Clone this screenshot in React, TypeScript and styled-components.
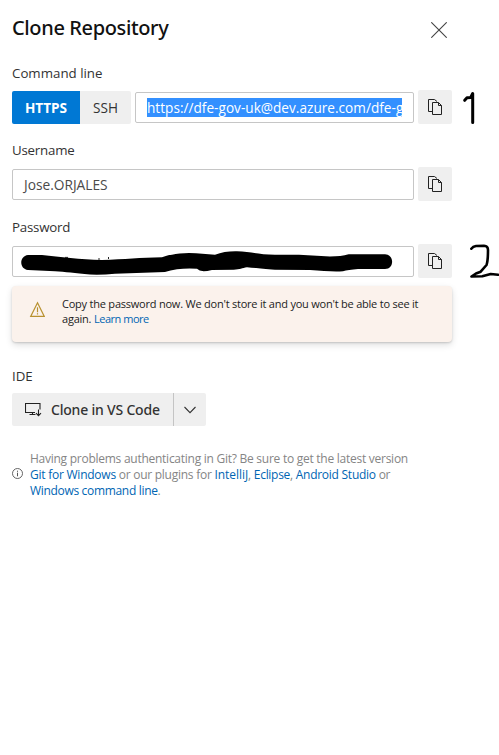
import React from "react";
import styled, { createGlobalStyle } from "styled-components";

const GlobalStyle = createGlobalStyle`
  * { box-sizing: border-box; }
  body { margin: 0; background: #fff; color: #333; font-family: "Open Sans", "Noto Sans", sans-serif; }
  button { font: inherit; color: inherit; border: 0; padding: 0; }
`;

const Panel = styled.main`
  position: relative;
  width: 499px;
  height: 755px;
  padding: 13px 0 0 12px;
  overflow: hidden;
  background: #fff;
`;
const Header = styled.header`
  display: flex;
  align-items: center;
  justify-content: space-between;
  width: 440px;
  height: 32px;
`;
const Title = styled.h1`
  margin: 0 0 2px;
  font: 500 20px/30px "Noto Sans", sans-serif;
  letter-spacing: -0.37px;
  color: #111;
`;
const CloseButton = styled.button`
  display: flex;
  margin: 2px 5px 0 0;
  background: none;
`;
const Label = styled.div<{ $tight?: boolean }>`
  font-size: 13.3px;
  line-height: 20px;
  letter-spacing: ${(p) => (p.$tight ? "-0.22px" : "0")};
`;
const Field = styled.section<{ $top: number }>`
  margin-top: ${(p) => p.$top}px;
`;
const FieldRow = styled.div`
  display: flex;
  align-items: center;
  width: 440px;
  height: 34px;
  margin-top: 7px;
`;
const Segments = styled.div`
  display: flex;
  flex-shrink: 0;
  height: 33px;
  margin: 1px 4px 0 0;
  border-radius: 2px;
  overflow: hidden;
`;
const Segment = styled.button<{ $active?: boolean }>`
  width: ${(p) => (p.$active ? 68 : 51)}px;
  font-size: 13.6px;
  font-weight: ${(p) => (p.$active ? 700 : 400)};
  background: ${(p) => (p.$active ? "#0078d4" : "#efefef")};
  color: ${(p) => (p.$active ? "#fff" : "#333")};
`;
const InputBox = styled.div`
  position: relative;
  flex: 1;
  min-width: 0;
  display: flex;
  align-items: center;
  height: 31px;
  margin-right: 4px;
  padding: 0 11px;
  border: 1px solid #c6c6c6;
  border-radius: 2px;
  font-size: 13.75px;
  letter-spacing: -0.02px;
  color: #4a4a4a;
  white-space: nowrap;
`;
const SelectedText = styled.span`
  flex: 1;
  min-width: 0;
  height: 19px;
  line-height: 20px;
  font-size: 13.6px;
  letter-spacing: 0.02px;
  overflow: hidden;
  background: #3390ff;
  color: #fff;
`;
const CopyButton = styled.button`
  display: flex;
  flex-shrink: 0;
  align-items: center;
  justify-content: center;
  width: 34px;
  height: 34px;
  border-radius: 2px;
  background: #efefef;
`;
const Scribble = styled.svg`
  position: absolute;
  left: -1px;
  top: -1px;
`;
const HandMark = styled.svg<{ $x: number; $y: number }>`
  position: absolute;
  left: ${(p) => p.$x}px;
  top: ${(p) => p.$y}px;
`;
const Message = styled.aside`
  display: flex;
  width: 440px;
  height: 56px;
  margin-top: 8px;
  padding: 10px 0 0 17px;
  border-radius: 4px;
  background: #fbf2ec;
  box-shadow: 0 3px 7px rgba(0, 0, 0, 0.13), 0 1px 2px rgba(0, 0, 0, 0.15);
  color: #222;
`;
const MessageText = styled.p`
  margin: 0 0 0 17px;
  font-size: 11px;
  line-height: 15px;
  letter-spacing: -0.22px;
  white-space: nowrap;
`;
const Link = styled.a<{ $spacing?: number }>`
  color: #0065b3;
  letter-spacing: ${(p) => (p.$spacing === undefined ? "inherit" : `${p.$spacing}px`)};
`;
const SplitButton = styled.div`
  display: flex;
  width: 194px;
  height: 33px;
  margin-top: 7px;
  border-radius: 2px;
  overflow: hidden;
  background: #efefef;
`;
const CloneButton = styled.button`
  display: flex;
  align-items: center;
  gap: 9px;
  width: 161px;
  padding-left: 13px;
  background: none;
  font: 500 14px/20px "Noto Sans", sans-serif;
  letter-spacing: -0.2px;
  white-space: nowrap;
`;
const MenuButton = styled.button`
  display: flex;
  flex: 1;
  align-items: center;
  justify-content: center;
  border-left: 1px solid #c4c4c4;
  background: none;
`;
const Help = styled.footer`
  display: flex;
  align-items: center;
  gap: 7px;
  margin-top: 25px;
`;
const InfoIcon = styled.svg`
  margin-bottom: 3px;
`;
const HelpText = styled.p`
  margin: 0;
  font-size: 12px;
  line-height: 16px;
  letter-spacing: -0.26px;
  color: #858585;
  white-space: nowrap;
`;

const CopyIcon = () => (
  <svg width="16" height="18" viewBox="0 0 16 18" fill="none" stroke="#222" strokeWidth="1">
    <path d="M5.5 13.5h-4v-12h6l2.500 2M5.500 4.500h6l3 3v9h-9zM11.500 4.500v3h3" />
  </svg>
);

const Copy = () => (
  <CopyButton aria-label="Copy">
    <CopyIcon />
  </CopyButton>
);

export default function App() {
  return (
    <>
      <GlobalStyle />
      <Panel>
        <Header>
          <Title>Clone Repository</Title>
          <CloseButton aria-label="Close">
            <svg width="16" height="16" viewBox="0 0 16 16" stroke="#444" strokeWidth="1.1">
              <path d="M.3.3l15.4 15.4M15.7.3L.3 15.7" />
            </svg>
          </CloseButton>
        </Header>

        <Field $top={18}>
          <Label>Command line</Label>
          <FieldRow>
            <Segments>
              <Segment $active>HTTPS</Segment>
              <Segment>SSH</Segment>
            </Segments>
            <InputBox>
              <SelectedText>https://dfe-gov-uk@dev.azure.com/dfe-g</SelectedText>
            </InputBox>
            <Copy />
          </FieldRow>
        </Field>

        <Field $top={16}>
          <Label $tight>Username</Label>
          <FieldRow>
            <InputBox>Jose.ORJALES</InputBox>
            <Copy />
          </FieldRow>
        </Field>

        <Field $top={16}>
          <Label $tight>Password</Label>
          <FieldRow>
            <InputBox>
              <Scribble width="402" height="31" viewBox="12 246 402 31">
                <path
                  d="M28 255H42C60 257 80 259.500 102 260C125 259.500 140 257.500 162 257.300C165 256 168 255 172 254.700Q181 252.500 196 253.200L215 254.700Q225 251 237 251.300C250 251.500 258 254.500 275 254.700H299L330 256.500Q341 256.500 348.700 254.300H385C394.500 254.500 394.500 269 385 269H358Q348 270 343 271.200C335 272 323 271 310 270L275 269.700C262 268.500 255 268 247 267.300C242 268 240 269.500 233.700 269.700L212 270Q207 271.300 203.700 271.300Q199 271 197 268.700Q186 268 177 269.300Q170 270.500 165 272L115 273.700Q102 275 90 274.500C75 273 65 272 55 271.300L28 270C19 269 19 256 28 255Z"
                  fill="#000"
                />
                <path d="M65 257.400h3M99 258v2M108.500 257v2" stroke="#222" />
              </Scribble>
            </InputBox>
            <Copy />
          </FieldRow>
        </Field>

        <Message>
          <svg width="16" height="28" viewBox="0 0 16 28" fill="none" stroke="#b8912f" strokeWidth="1.2">
            <path d="M8.500 6.800L15.300 20.400H1.700zM8.500 11.200v5M8.500 17.300v1.300" />
          </svg>
          <MessageText>
            Copy the password now. We don't store it and you won't be able to see it
            <br />
            again. <Link $spacing={-0.48}>Learn more</Link>
          </MessageText>
        </Message>

        <Field $top={24}>
          <Label>IDE</Label>
          <SplitButton>
            <CloneButton>
              <svg width="17" height="15" viewBox="0 0 17 15" fill="none" stroke="#222" strokeWidth="1.1">
                <path d="M10 10.500H.5v-9h14.500v6M4.500 12.500h6M7.500 10.500v2M13.500 7.500v6M11 11.200l2.500 2.500 2.500-2.500" />
              </svg>
              Clone in VS Code
            </CloneButton>
            <MenuButton aria-label="More options">
              <svg width="12" height="8" viewBox="0 0 12 8" fill="none" stroke="#333" strokeWidth="1.1">
                <path d="M.5 1L6 6.600 11.500 1" />
              </svg>
            </MenuButton>
          </SplitButton>
        </Field>

        <Help>
          <InfoIcon width="11" height="11" viewBox="0 0 11 11" fill="none" stroke="#555">
            <circle cx="5.5" cy="5.5" r="5" strokeWidth=".9" />
            <path d="M5.500 4.700v3.600M5.500 2.700v1.100" />
          </InfoIcon>
          <HelpText>
            Having problems authenticating in Git? Be sure to get the latest version
            <br />
            <Link $spacing={-0.24}>Git for Windows</Link> or our plugins for <Link $spacing={-0.04}>IntelliJ</Link>,{" "}
            <Link $spacing={-0.3}>Eclipse</Link>, <Link $spacing={-0.26}>Android Studio</Link> or
            <br />
            <Link $spacing={-0.32}>Windows command line</Link>.
          </HelpText>
        </Help>

        <HandMark $x={460} $y={90} width="20" height="36" viewBox="460 90 20 36" fill="none" stroke="#000" strokeWidth="3" strokeLinecap="round" strokeLinejoin="round">
          <path d="M464.700 100.300L467 97.800L470.700 97.500L472.700 93.500V122.500" />
        </HandMark>
        <HandMark $x={468} $y={240} width="31" height="42" viewBox="468 240 31 42" fill="none" stroke="#000" strokeWidth="2.600" strokeLinecap="round" strokeLinejoin="round">
          <path d="M471.300 248.700Q473 246.500 476 246L484 245.700Q488 246 488 250C488 256 488 261 486.500 265L480.700 271.700L476 273.500L471.500 276.500L482.300 276.300L490.700 274L498 274.700" />
        </HandMark>
      </Panel>
    </>
  );
}
